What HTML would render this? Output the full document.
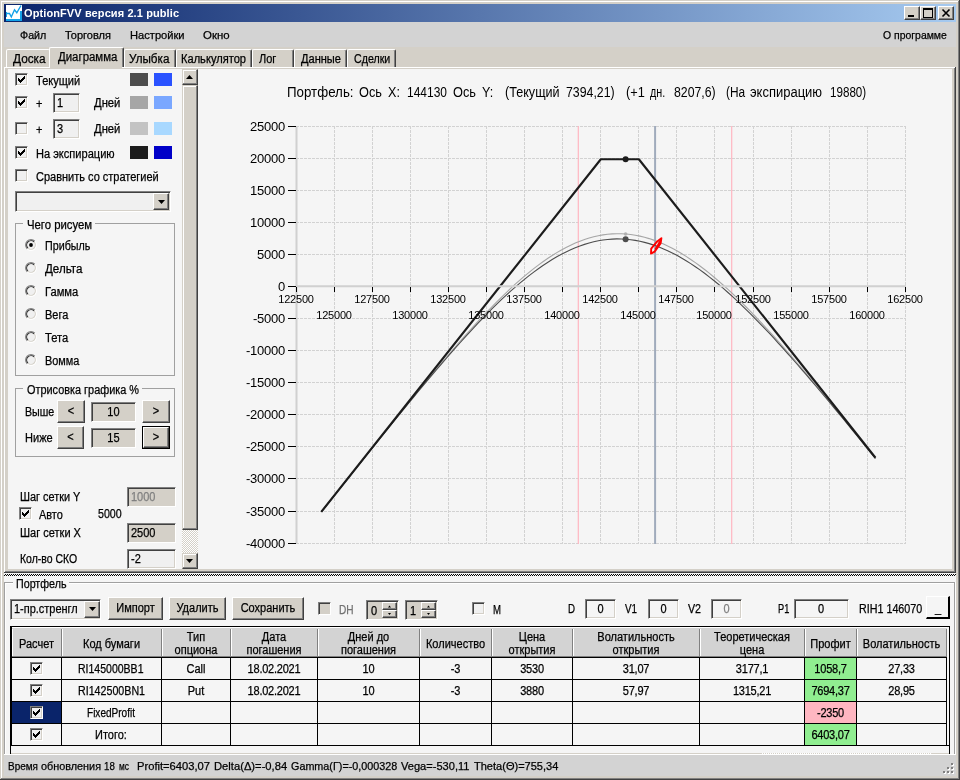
<!DOCTYPE html>
<html lang="ru"><head><meta charset="utf-8"><title>OptionFVV версия 2.1 public</title>
<style>
html,body{margin:0;padding:0;background:#d4d0c8;}
body{width:960px;height:780px;position:relative;overflow:hidden;font-family:"Liberation Sans",sans-serif;}
#w{position:absolute;left:0;top:0;width:960px;height:780px;overflow:hidden;}
#w div,#w span,#w svg{position:absolute;}
.t{font:12px/14px "Liberation Sans",sans-serif;color:#000;white-space:nowrap;transform:scaleX(.917);transform-origin:0 50%;}
.tm{font:11px/13px "Liberation Sans",sans-serif;color:#000;white-space:nowrap;}
.tt{font:bold 11px/13px "Liberation Sans",sans-serif;color:#fff;white-space:nowrap;letter-spacing:.1px;}
.ct{font:13px/15px "Liberation Sans",sans-serif;color:#000;white-space:nowrap;word-spacing:1.6px;letter-spacing:.1px;}
.cy{font:13px/15px "Liberation Sans",sans-serif;color:#000;white-space:nowrap;letter-spacing:-.25px;}
.cx{font:11px/13px "Liberation Sans",sans-serif;color:#000;white-space:nowrap;letter-spacing:-.2px;}
.hd{line-height:13px;}
.c{left:0;top:0;width:100%;height:100%;text-align:center;transform-origin:50% 50%;display:flex;align-items:center;justify-content:center;margin-top:-1px;}
.f,.t,.tm{-webkit-text-stroke:.25px;}
.f{white-space:nowrap;transform-origin:0 50%;font-family:"Liberation Sans",sans-serif;}
.g{left:0;top:0;width:960px;height:780px;will-change:transform;}
.gc{left:0;top:0;width:960px;height:780px;}
.sunk{box-sizing:border-box;border:1px solid;border-color:#808080 #fff #fff #808080;box-shadow:inset 1px 1px 0 #404040,inset -1px -1px 0 #d4d0c8;}
.btn{box-sizing:border-box;border:1px solid;border-color:#fff #404040 #404040 #fff;box-shadow:inset -1px -1px 0 #808080,inset 1px 1px 0 #d4d0c8;}
.sbtn{box-sizing:border-box;border:1px solid;border-color:#d4d0c8 #404040 #404040 #d4d0c8;box-shadow:inset -1px -1px 0 #808080,inset 1px 1px 0 #fff;}
.nr{border-right-color:transparent !important;box-shadow:none !important;}
.tab{box-sizing:border-box;border:1px solid;border-color:#fff #404040 transparent #fff;border-bottom:none;box-shadow:inset -1px 0 0 #808080;border-radius:2px 2px 0 0;}
</style></head>
<body><div id="w">
<div class="g">
<div style="left:0px;top:0px;width:960px;height:780px;background:#d4d0c8;"></div>
<div style="left:1px;top:1px;width:957px;height:1px;background:#ffffff;"></div>
<div style="left:1px;top:1px;width:1px;height:777px;background:#ffffff;"></div>
<div style="left:958px;top:1px;width:1px;height:778px;background:#808080;"></div>
<div style="left:1px;top:778px;width:958px;height:1px;background:#808080;"></div>
<div style="left:959px;top:0px;width:1px;height:780px;background:#404040;"></div>
<div style="left:0px;top:779px;width:960px;height:1px;background:#404040;"></div>
<div style="left:4px;top:4px;width:952px;height:18px;background:linear-gradient(90deg,#0a246a 0%,#a6caf0 100%);"></div>
<svg style="position:absolute;left:6px;top:5px" width="16" height="16" viewBox="0 0 16 16"><rect x="0" y="0" width="16" height="16" fill="#fff"/><rect x="0" y="14" width="16" height="2" fill="#12a1e8"/><rect x="14" y="6" width="2" height="10" fill="#12a1e8"/><rect x="0" y="7" width="1" height="5" fill="#12a1e8"/><path d="M0.5 8.5L3.5 8.5L5.3 12L8.5 4.8L10.8 7.8L15 0.5" fill="none" stroke="#12a1e8" stroke-width="1.4"/></svg>
<span class="tt" style="left:24px;top:7px;">OptionFVV версия 2.1 public</span>
<div class="btn" style="left:904px;top:6px;width:16px;height:14px;background:#d4d0c8;"></div>
<div class="btn" style="left:920px;top:6px;width:16px;height:14px;background:#d4d0c8;"></div>
<div class="btn" style="left:938px;top:6px;width:16px;height:14px;background:#d4d0c8;"></div>
<svg style="position:absolute;left:904px;top:6px" width="50" height="14" viewBox="0 0 50 14"><rect x="4" y="9" width="6" height="2" fill="#000"/><rect x="19" y="2" width="9" height="9" fill="none" stroke="#000" stroke-width="1" transform="translate(.5 .5)"/><rect x="19" y="2" width="10" height="2" fill="#000"/><path d="M38.5 3.5l7 7M45.5 3.5l-7 7" stroke="#000" stroke-width="1.6" fill="none"/></svg>
<div style="left:4px;top:22px;width:952px;height:25px;background:#d3d3d3;"></div>
<span class="f" style="left:19.50px;top:29px;font-size:11px;line-height:13px;color:#000;transform:scaleX(0.9722);">Файл</span>
<span class="f" style="left:65.00px;top:29px;font-size:11px;line-height:13px;color:#000;transform:scaleX(1.0000);">Торговля</span>
<span class="f" style="left:130.00px;top:29px;font-size:11px;line-height:13px;color:#000;transform:scaleX(1.0116);">Настройки</span>
<span class="f" style="left:203.00px;top:29px;font-size:11px;line-height:13px;color:#000;transform:scaleX(1.0392);">Окно</span>
<span class="f" style="left:882.70px;top:29px;font-size:11px;line-height:13px;color:#000;transform:scaleX(0.9487);">О программе</span>
<div class="tab nr" style="left:6px;top:49px;width:44px;height:18px;background:#d4d0c8;"></div>
<span class="f" style="left:13.00px;top:52px;font-size:12px;line-height:14px;color:#000;transform:scaleX(0.9850);">Доска</span>
<div class="tab" style="left:49px;top:47px;width:75px;height:22px;background:#d4d0c8;"></div>
<span class="f" style="left:58.00px;top:50px;font-size:12px;line-height:14px;color:#000;transform:scaleX(0.9520);">Диаграмма</span>
<div class="tab" style="left:124px;top:49px;width:52px;height:18px;background:#d4d0c8;"></div>
<span class="f" style="left:129.00px;top:52px;font-size:12px;line-height:14px;color:#000;transform:scaleX(0.9730);">Улыбка</span>
<div class="tab" style="left:176px;top:49px;width:76px;height:18px;background:#d4d0c8;"></div>
<span class="f" style="left:181.00px;top:52px;font-size:12px;line-height:14px;color:#000;transform:scaleX(0.9253);">Калькулятор</span>
<div class="tab" style="left:252px;top:49px;width:42px;height:18px;background:#d4d0c8;"></div>
<span class="f" style="left:258.75px;top:52px;font-size:12px;line-height:14px;color:#000;transform:scaleX(0.9139);">Лог</span>
<div class="tab" style="left:294px;top:49px;width:53px;height:18px;background:#d4d0c8;"></div>
<span class="f" style="left:301.00px;top:52px;font-size:12px;line-height:14px;color:#000;transform:scaleX(0.9222);">Данные</span>
<div class="tab" style="left:347px;top:49px;width:49px;height:18px;background:#d4d0c8;"></div>
<span class="f" style="left:353.75px;top:52px;font-size:12px;line-height:14px;color:#000;transform:scaleX(0.8869);">Сделки</span>
<div style="left:4px;top:67px;width:952px;height:506px;background:#d4d0c8;"></div>
<div style="left:4px;top:67px;width:951px;height:1px;background:#ffffff;"></div>
<div style="left:4px;top:67px;width:1px;height:505px;background:#ffffff;"></div>
<div style="left:50px;top:67px;width:72px;height:1px;background:#d4d0c8;"></div>
<div style="left:954px;top:68px;width:1px;height:504px;background:#808080;"></div>
<div style="left:955px;top:67px;width:1px;height:506px;background:#404040;"></div>
<div style="left:5px;top:571px;width:950px;height:1px;background:#808080;"></div>
<div style="left:4px;top:572px;width:952px;height:1px;background:#404040;"></div>
<div style="left:8px;top:69px;width:944px;height:500px;background:#f5f5f5;"></div>
<div class="sunk" style="left:15px;top:73px;width:13px;height:13px;background:#f0f0f0;"><svg width="7" height="7" viewBox="0 0 7 7" style="position:absolute;left:2px;top:2px"><path d="M0 2h1v1h1v1h1v-1h1v-1h1v-1h1v-1h1v3h-1v1h-1v1h-1v1h-1v1h-1v-1h-1v-1h-1z" fill="#000"/></svg></div>
<div style="left:130px;top:73px;width:18px;height:13px;background:#4d4d4d;"></div>
<div style="left:154px;top:73px;width:18px;height:13px;background:#2a52ff;"></div>
<span class="f" style="left:36.00px;top:74px;font-size:12px;line-height:14px;color:#000;transform:scaleX(0.9208);">Текущий</span>
<div class="sunk" style="left:15px;top:96px;width:13px;height:13px;background:#f0f0f0;"><svg width="7" height="7" viewBox="0 0 7 7" style="position:absolute;left:2px;top:2px"><path d="M0 2h1v1h1v1h1v-1h1v-1h1v-1h1v-1h1v3h-1v1h-1v1h-1v1h-1v1h-1v-1h-1v-1h-1z" fill="#000"/></svg></div>
<div style="left:130px;top:96px;width:18px;height:13px;background:#a6a6a6;"></div>
<div style="left:154px;top:96px;width:18px;height:13px;background:#7aa7ff;"></div>
<span class="t" style="left:36px;top:97px;">+</span>
<span class="f" style="left:94.00px;top:96px;font-size:12px;line-height:14px;color:#000;transform:scaleX(0.9387);">Дней</span>
<div class="sunk" style="left:15px;top:122px;width:13px;height:13px;background:#f0f0f0;"></div>
<div style="left:130px;top:122px;width:18px;height:13px;background:#c3c3c3;"></div>
<div style="left:154px;top:122px;width:18px;height:13px;background:#a8d8ff;"></div>
<span class="t" style="left:36px;top:123px;">+</span>
<span class="f" style="left:94.00px;top:122px;font-size:12px;line-height:14px;color:#000;transform:scaleX(0.9387);">Дней</span>
<div class="sunk" style="left:15px;top:146px;width:13px;height:13px;background:#f0f0f0;"><svg width="7" height="7" viewBox="0 0 7 7" style="position:absolute;left:2px;top:2px"><path d="M0 2h1v1h1v1h1v-1h1v-1h1v-1h1v-1h1v3h-1v1h-1v1h-1v1h-1v1h-1v-1h-1v-1h-1z" fill="#000"/></svg></div>
<div style="left:130px;top:146px;width:18px;height:13px;background:#1c1c1c;"></div>
<div style="left:154px;top:146px;width:18px;height:13px;background:#0000c8;"></div>
<span class="f" style="left:35.60px;top:147px;font-size:12px;line-height:14px;color:#000;transform:scaleX(0.9220);">На экспирацию</span>
<div class="sunk" style="left:53px;top:93px;width:27px;height:20px;background:#f0f0f0;"></div>
<span class="t" style="left:57px;top:96px;">1</span>
<div class="sunk" style="left:53px;top:119px;width:27px;height:20px;background:#f0f0f0;"></div>
<span class="t" style="left:57px;top:122px;">3</span>
<div class="sunk" style="left:15px;top:169px;width:13px;height:13px;background:#f0f0f0;"></div>
<span class="f" style="left:35.60px;top:170px;font-size:12px;line-height:14px;color:#000;transform:scaleX(0.9157);">Сравнить со стратегией</span>
<div class="sunk" style="left:15px;top:191px;width:156px;height:21px;background:#f0f0f0;"></div>
<div class="btn" style="left:153px;top:193px;width:16px;height:17px;background:#d4d0c8;"></div>
<svg style="position:absolute;left:158px;top:200px" width="7" height="4" viewBox="0 0 7 4"><path d="M0 0h7L3.5 4z" fill="#000"/></svg>
<div style="left:15px;top:223px;width:160px;height:153px;border:1px solid #a0a0a0;box-sizing:border-box;"></div>
<div style="left:23px;top:217px;width:72px;height:14px;background:#f5f5f5;"></div>
<span class="f" style="left:26.50px;top:218px;font-size:12px;line-height:14px;color:#000;transform:scaleX(0.9449);">Чего рисуем</span>
<svg style="position:absolute;left:25px;top:239px" width="12" height="12" viewBox="0 0 12 12"><circle cx="6" cy="6" r="4.5" fill="#f0f0f0"/><path d="M2.18 9.82A5.4 5.4 0 0 1 9.82 2.18" fill="none" stroke="#808080" stroke-width="1.1"/><path d="M9.82 2.18A5.4 5.4 0 0 1 2.18 9.82" fill="none" stroke="#ffffff" stroke-width="1.1"/><path d="M2.89 9.11A4.4 4.4 0 0 1 9.11 2.89" fill="none" stroke="#303030" stroke-width="1.1"/><path d="M9.11 2.89A4.4 4.4 0 0 1 2.89 9.11" fill="none" stroke="#d4d0c8" stroke-width="1.1"/><circle cx="6" cy="6" r="1.9" fill="#000"/></svg>
<span class="f" style="left:44.80px;top:239px;font-size:12px;line-height:14px;color:#000;transform:scaleX(0.8946);">Прибыль</span>
<svg style="position:absolute;left:25px;top:262px" width="12" height="12" viewBox="0 0 12 12"><circle cx="6" cy="6" r="4.5" fill="#f0f0f0"/><path d="M2.18 9.82A5.4 5.4 0 0 1 9.82 2.18" fill="none" stroke="#808080" stroke-width="1.1"/><path d="M9.82 2.18A5.4 5.4 0 0 1 2.18 9.82" fill="none" stroke="#ffffff" stroke-width="1.1"/><path d="M2.89 9.11A4.4 4.4 0 0 1 9.11 2.89" fill="none" stroke="#303030" stroke-width="1.1"/><path d="M9.11 2.89A4.4 4.4 0 0 1 2.89 9.11" fill="none" stroke="#d4d0c8" stroke-width="1.1"/></svg>
<span class="f" style="left:44.80px;top:262px;font-size:12px;line-height:14px;color:#000;transform:scaleX(0.9646);">Дельта</span>
<svg style="position:absolute;left:25px;top:285px" width="12" height="12" viewBox="0 0 12 12"><circle cx="6" cy="6" r="4.5" fill="#f0f0f0"/><path d="M2.18 9.82A5.4 5.4 0 0 1 9.82 2.18" fill="none" stroke="#808080" stroke-width="1.1"/><path d="M9.82 2.18A5.4 5.4 0 0 1 2.18 9.82" fill="none" stroke="#ffffff" stroke-width="1.1"/><path d="M2.89 9.11A4.4 4.4 0 0 1 9.11 2.89" fill="none" stroke="#303030" stroke-width="1.1"/><path d="M9.11 2.89A4.4 4.4 0 0 1 2.89 9.11" fill="none" stroke="#d4d0c8" stroke-width="1.1"/></svg>
<span class="f" style="left:44.80px;top:285px;font-size:12px;line-height:14px;color:#000;transform:scaleX(0.9315);">Гамма</span>
<svg style="position:absolute;left:25px;top:308px" width="12" height="12" viewBox="0 0 12 12"><circle cx="6" cy="6" r="4.5" fill="#f0f0f0"/><path d="M2.18 9.82A5.4 5.4 0 0 1 9.82 2.18" fill="none" stroke="#808080" stroke-width="1.1"/><path d="M9.82 2.18A5.4 5.4 0 0 1 2.18 9.82" fill="none" stroke="#ffffff" stroke-width="1.1"/><path d="M2.89 9.11A4.4 4.4 0 0 1 9.11 2.89" fill="none" stroke="#303030" stroke-width="1.1"/><path d="M9.11 2.89A4.4 4.4 0 0 1 2.89 9.11" fill="none" stroke="#d4d0c8" stroke-width="1.1"/></svg>
<span class="f" style="left:44.80px;top:308px;font-size:12px;line-height:14px;color:#000;transform:scaleX(0.9137);">Вега</span>
<svg style="position:absolute;left:25px;top:331px" width="12" height="12" viewBox="0 0 12 12"><circle cx="6" cy="6" r="4.5" fill="#f0f0f0"/><path d="M2.18 9.82A5.4 5.4 0 0 1 9.82 2.18" fill="none" stroke="#808080" stroke-width="1.1"/><path d="M9.82 2.18A5.4 5.4 0 0 1 2.18 9.82" fill="none" stroke="#ffffff" stroke-width="1.1"/><path d="M2.89 9.11A4.4 4.4 0 0 1 9.11 2.89" fill="none" stroke="#303030" stroke-width="1.1"/><path d="M9.11 2.89A4.4 4.4 0 0 1 2.89 9.11" fill="none" stroke="#d4d0c8" stroke-width="1.1"/></svg>
<span class="f" style="left:44.80px;top:331px;font-size:12px;line-height:14px;color:#000;transform:scaleX(0.9320);">Тета</span>
<svg style="position:absolute;left:25px;top:354px" width="12" height="12" viewBox="0 0 12 12"><circle cx="6" cy="6" r="4.5" fill="#f0f0f0"/><path d="M2.18 9.82A5.4 5.4 0 0 1 9.82 2.18" fill="none" stroke="#808080" stroke-width="1.1"/><path d="M9.82 2.18A5.4 5.4 0 0 1 2.18 9.82" fill="none" stroke="#ffffff" stroke-width="1.1"/><path d="M2.89 9.11A4.4 4.4 0 0 1 9.11 2.89" fill="none" stroke="#303030" stroke-width="1.1"/><path d="M9.11 2.89A4.4 4.4 0 0 1 2.89 9.11" fill="none" stroke="#d4d0c8" stroke-width="1.1"/></svg>
<span class="f" style="left:44.80px;top:354px;font-size:12px;line-height:14px;color:#000;transform:scaleX(0.9083);">Вомма</span>
<div style="left:15px;top:388px;width:160px;height:69px;border:1px solid #a0a0a0;box-sizing:border-box;"></div>
<div style="left:23px;top:382px;width:119px;height:14px;background:#f5f5f5;"></div>
<span class="f" style="left:26.50px;top:383px;font-size:12px;line-height:14px;color:#000;transform:scaleX(0.9078);">Отрисовка графика %</span>
<span class="f" style="left:25.40px;top:405px;font-size:12px;line-height:14px;color:#000;transform:scaleX(0.8882);">Выше</span>
<div class="btn" style="left:57px;top:400px;width:28px;height:23px;background:#d4d0c8;"><span class="t c">&lt;</span></div>
<div class="sunk" style="left:91px;top:402px;width:45px;height:20px;background:#d4d0c8;"></div>
<span class="t" style="left:91px;top:405px;width:45px;text-align:center;transform-origin:50% 50%;">10</span>
<div class="btn" style="left:142px;top:400px;width:28px;height:23px;background:#d4d0c8;"><span class="t c">&gt;</span></div>
<span class="f" style="left:25.40px;top:431px;font-size:12px;line-height:14px;color:#000;transform:scaleX(0.9195);">Ниже</span>
<div class="btn" style="left:57px;top:426px;width:27px;height:23px;background:#d4d0c8;"><span class="t c">&lt;</span></div>
<div class="sunk" style="left:91px;top:428px;width:45px;height:20px;background:#d4d0c8;"></div>
<span class="t" style="left:91px;top:431px;width:45px;text-align:center;transform-origin:50% 50%;">15</span>
<div style="left:142px;top:426px;width:28px;height:23px;background:#000;"></div>
<div class="btn" style="left:143px;top:427px;width:26px;height:21px;background:#d4d0c8;"><span class="t c">&gt;</span></div>
<span class="f" style="left:19.80px;top:490px;font-size:12px;line-height:14px;color:#000;transform:scaleX(0.9083);">Шаг сетки Y</span>
<div class="sunk" style="left:127px;top:487px;width:49px;height:20px;background:#d4d0c8;"></div>
<span class="t" style="left:131px;top:490px;color:#808080;">1000</span>
<div class="sunk" style="left:19px;top:507px;width:13px;height:13px;background:#f0f0f0;"><svg width="7" height="7" viewBox="0 0 7 7" style="position:absolute;left:2px;top:2px"><path d="M0 2h1v1h1v1h1v-1h1v-1h1v-1h1v-1h1v3h-1v1h-1v1h-1v1h-1v1h-1v-1h-1v-1h-1z" fill="#000"/></svg></div>
<span class="f" style="left:39.20px;top:508px;font-size:12px;line-height:14px;color:#000;transform:scaleX(0.9110);">Авто</span>
<span class="f" style="left:97.50px;top:507px;font-size:12px;line-height:14px;color:#000;transform:scaleX(0.8879);">5000</span>
<span class="f" style="left:19.80px;top:526px;font-size:12px;line-height:14px;color:#000;transform:scaleX(0.9173);">Шаг сетки X</span>
<div class="sunk" style="left:127px;top:523px;width:49px;height:20px;background:#d4d0c8;"></div>
<span class="t" style="left:131px;top:526px;">2500</span>
<span class="f" style="left:19.80px;top:552px;font-size:12px;line-height:14px;color:#000;transform:scaleX(0.8733);">Кол-во СКО</span>
<div class="sunk" style="left:127px;top:549px;width:49px;height:20px;background:#f0f0f0;"></div>
<span class="t" style="left:131px;top:552px;">-2</span>
<div style="left:182px;top:69px;width:16px;height:500px;background:repeating-conic-gradient(#fff 0 25%,#d4d0c8 0 50%) 0 0/2px 2px;"></div>
<div class="sbtn" style="left:182px;top:69px;width:16px;height:16px;background:#d4d0c8;"></div>
<svg style="position:absolute;left:186px;top:75px" width="7" height="4" viewBox="0 0 7 4"><path d="M0 4h7L3.5 0z" fill="#000"/></svg>
<div class="sbtn" style="left:182px;top:85px;width:16px;height:445px;background:#d4d0c8;"></div>
<div class="sbtn" style="left:182px;top:553px;width:16px;height:16px;background:#d4d0c8;"></div>
<svg style="position:absolute;left:186px;top:559px" width="7" height="4" viewBox="0 0 7 4"><path d="M0 0h7L3.5 4z" fill="#000"/></svg>
<svg style="position:absolute;left:198px;top:69px" width="754" height="500" viewBox="198 69 754 500"><path d="M296 126.5H906M296 158.5H906M296 190.5H906M296 222.5H906M296 254.5H906M296 318.5H906M296 350.5H906M296 382.5H906M296 414.5H906M296 446.5H906M296 478.5H906M296 511.5H906M296 543.5H906" fill="none" stroke="#d2d2d2" stroke-width="1" stroke-dasharray="3 1"/><path d="M334.5 126V544M372.5 126V544M410.5 126V544M448.5 126V544M486.5 126V544M524.5 126V544M562.5 126V544M600.5 126V544M638.5 126V544M676.5 126V544M714.5 126V544M753.5 126V544M791.5 126V544M829.5 126V544M867.5 126V544M905.5 126V544" fill="none" stroke="#d2d2d2" stroke-width="1" stroke-dasharray="3 1"/><path d="M578.3 126V544" stroke="#ffb6c1" stroke-width="1.2" fill="none"/><path d="M731.7 126V544" stroke="#ffb6c1" stroke-width="1.2" fill="none"/><path d="M655.1 126V544" stroke="#a0abbc" stroke-width="2" fill="none"/><path d="M321.27 511.92L325.89 506.10L330.51 500.28L335.12 494.47L339.74 488.66L344.36 482.85L348.98 477.05L353.60 471.25L358.22 465.45L362.83 459.66L367.45 453.87L372.07 448.09L376.69 442.32L381.31 436.56L385.92 430.80L390.54 425.06L395.16 419.33L399.78 413.62L404.40 407.92L409.02 402.24L413.63 396.58L418.25 390.94L422.87 385.32L427.49 379.74L432.11 374.18L436.73 368.66L441.34 363.18L445.96 357.74L450.58 352.34L455.20 346.99L459.82 341.70L464.43 336.46L469.05 331.29L473.67 326.18L478.29 321.15L482.91 316.19L487.53 311.32L492.14 306.54L496.76 301.86L501.38 297.28L506.00 292.81L510.62 288.45L515.24 284.21L519.85 280.11L524.47 276.13L529.09 272.30L533.71 268.62L538.33 265.09L542.95 261.72L547.56 258.51L552.18 255.48L556.80 252.63L561.42 249.96L566.04 247.47L570.65 245.18L575.27 243.09L579.89 241.20L584.51 239.52L589.13 238.05L593.75 236.78L598.36 235.74L602.98 234.91L607.60 234.29L612.22 233.90L616.84 233.72L621.46 233.77L626.07 234.03L630.69 234.52L635.31 235.22L639.93 236.13L644.55 237.26L649.16 238.60L653.78 240.14L658.40 241.89L663.02 243.83L667.64 245.97L672.26 248.31L676.87 250.82L681.49 253.52L686.11 256.39L690.73 259.44L695.35 262.64L699.97 266.01L704.58 269.52L709.20 273.19L713.82 276.99L718.44 280.92L723.06 284.99L727.68 289.17L732.29 293.47L736.91 297.88L741.53 302.39L746.15 307.01L750.77 311.71L755.38 316.50L760.00 321.38L764.62 326.33L769.24 331.35L773.86 336.44L778.48 341.59L783.09 346.80L787.71 352.06L792.33 357.38L796.95 362.74L801.57 368.14L806.19 373.58L810.80 379.06L815.42 384.58L820.04 390.12L824.66 395.69L829.28 401.29L833.89 406.91L838.51 412.55L843.13 418.21L847.75 423.88L852.37 429.58L856.99 435.29L861.60 441.01L866.22 446.74L870.84 452.48L875.46 458.24" fill="none" stroke="#a6a6a6" stroke-width="1.1"/><path d="M321.27 511.95L325.89 506.14L330.51 500.33L335.12 494.53L339.74 488.73L344.36 482.93L348.98 477.13L353.60 471.35L358.22 465.57L362.83 459.79L367.45 454.02L372.07 448.27L376.69 442.52L381.31 436.78L385.92 431.06L390.54 425.35L395.16 419.66L399.78 413.98L404.40 408.33L409.02 402.69L413.63 397.09L418.25 391.50L422.87 385.95L427.49 380.43L432.11 374.95L436.73 369.50L441.34 364.10L445.96 358.75L450.58 353.44L455.20 348.19L459.82 343.00L464.43 337.87L469.05 332.81L473.67 327.82L478.29 322.91L482.91 318.08L487.53 313.34L492.14 308.70L496.76 304.16L501.38 299.72L506.00 295.39L510.62 291.18L515.24 287.09L519.85 283.14L524.47 279.31L529.09 275.63L533.71 272.10L538.33 268.71L542.95 265.49L547.56 262.42L552.18 259.53L556.80 256.81L561.42 254.27L566.04 251.90L570.65 249.73L575.27 247.75L579.89 245.96L584.51 244.36L589.13 242.97L593.75 241.78L598.36 240.79L602.98 240.02L607.60 239.44L612.22 239.08L616.84 238.92L621.46 238.98L626.07 239.24L630.69 239.71L635.31 240.38L639.93 241.26L644.55 242.35L649.16 243.63L653.78 245.11L658.40 246.78L663.02 248.64L667.64 250.70L672.26 252.93L676.87 255.34L681.49 257.93L686.11 260.68L690.73 263.60L695.35 266.68L699.97 269.91L704.58 273.30L709.20 276.82L713.82 280.48L718.44 284.28L723.06 288.20L727.68 292.25L732.29 296.41L736.91 300.68L741.53 305.06L746.15 309.53L750.77 314.11L755.38 318.77L760.00 323.52L764.62 328.34L769.24 333.24L773.86 338.22L778.48 343.26L783.09 348.36L787.71 353.52L792.33 358.74L796.95 364.00L801.57 369.32L806.19 374.67L810.80 380.07L815.42 385.51L820.04 390.98L824.66 396.48L829.28 402.01L833.89 407.58L838.51 413.16L843.13 418.77L847.75 424.40L852.37 430.05L856.99 435.71L861.60 441.39L866.22 447.09L870.84 452.80L875.46 458.52" fill="none" stroke="#4d4d4d" stroke-width="1.1"/><path d="M321.27 511.88L600.80 159.28L638.86 159.28L875.46 457.72" fill="none" stroke="#1c1c1c" stroke-width="2.15" stroke-linejoin="round"/><path d="M296.5 126V544M296 286.3H906" fill="none" stroke="#d0d0d0" stroke-width="2"/><path d="M288 126.5H296M288 158.5H296M288 190.5H296M288 222.5H296M288 254.5H296M288 286.5H296M288 318.5H296M288 350.5H296M288 382.5H296M288 414.5H296M288 446.5H296M288 478.5H296M288 511.5H296M288 543.5H296M296.5 287V292M334.5 287V292M372.5 287V292M410.5 287V292M448.5 287V292M486.5 287V292M524.5 287V292M562.5 287V292M600.5 287V292M638.5 287V292M676.5 287V292M714.5 287V292M753.5 287V292M791.5 287V292M829.5 287V292M867.5 287V292M905.5 287V292" fill="none" stroke="#000" stroke-width="1"/><circle cx="625.62" cy="159.28" r="3" fill="#1c1c1c"/><circle cx="625.62" cy="234.00" r="1.8" fill="#b0b0b0"/><circle cx="625.62" cy="239.21" r="3" fill="#4d4d4d"/><path d="M651 253.6L651.2 248.6L657.2 241.4L661.4 238.2L660.6 243.4L654.6 251.6Z" fill="none" stroke="#ff0000" stroke-width="1.9" stroke-linejoin="round"/><path d="M655.5 249.5L660.5 241" fill="none" stroke="#ff0000" stroke-width="2.2"/></svg>
</div><div class="gc">
<span class="f" style="left:286.70px;top:84px;font-size:14px;line-height:16px;color:#000;transform:scaleX(0.9514);-webkit-text-stroke:0;">Портфель:</span>
<span class="f" style="left:359.20px;top:84px;font-size:14px;line-height:16px;color:#000;transform:scaleX(0.9114);-webkit-text-stroke:0;">Ось</span>
<span class="f" style="left:387.90px;top:84px;font-size:14px;line-height:16px;color:#000;transform:scaleX(0.8981);-webkit-text-stroke:0;">X:</span>
<span class="f" style="left:407.10px;top:84px;font-size:14px;line-height:16px;color:#000;transform:scaleX(0.8556);-webkit-text-stroke:0;">144130</span>
<span class="f" style="left:453.30px;top:84px;font-size:14px;line-height:16px;color:#000;transform:scaleX(0.9134);-webkit-text-stroke:0;">Ось</span>
<span class="f" style="left:481.70px;top:84px;font-size:14px;line-height:16px;color:#000;transform:scaleX(0.8960);-webkit-text-stroke:0;">Y:</span>
<span class="f" style="left:504.60px;top:84px;font-size:14px;line-height:16px;color:#000;transform:scaleX(0.9006);-webkit-text-stroke:0;">(Текущий</span>
<span class="f" style="left:565.80px;top:84px;font-size:14px;line-height:16px;color:#000;transform:scaleX(0.8796);-webkit-text-stroke:0;">7394,21)</span>
<span class="f" style="left:625.80px;top:84px;font-size:14px;line-height:16px;color:#000;transform:scaleX(0.9115);-webkit-text-stroke:0;">(+1</span>
<span class="f" style="left:649.80px;top:84px;font-size:14px;line-height:16px;color:#000;transform:scaleX(0.7696);-webkit-text-stroke:0;">дн.</span>
<span class="f" style="left:673.75px;top:84px;font-size:14px;line-height:16px;color:#000;transform:scaleX(0.8768);-webkit-text-stroke:0;">8207,6)</span>
<span class="f" style="left:725.80px;top:84px;font-size:14px;line-height:16px;color:#000;transform:scaleX(0.8486);-webkit-text-stroke:0;">(На</span>
<span class="f" style="left:750.20px;top:84px;font-size:14px;line-height:16px;color:#000;transform:scaleX(0.9273);-webkit-text-stroke:0;">экспирацию</span>
<span class="f" style="left:829.60px;top:84px;font-size:14px;line-height:16px;color:#000;transform:scaleX(0.8298);-webkit-text-stroke:0;">19880)</span>
<span class="cy" style="left:206px;top:119px;width:79px;text-align:right;transform-origin:100% 50%;">25000</span>
<span class="cy" style="left:206px;top:151px;width:79px;text-align:right;transform-origin:100% 50%;">20000</span>
<span class="cy" style="left:206px;top:183px;width:79px;text-align:right;transform-origin:100% 50%;">15000</span>
<span class="cy" style="left:206px;top:215px;width:79px;text-align:right;transform-origin:100% 50%;">10000</span>
<span class="cy" style="left:206px;top:247px;width:79px;text-align:right;transform-origin:100% 50%;">5000</span>
<span class="cy" style="left:206px;top:279px;width:79px;text-align:right;transform-origin:100% 50%;">0</span>
<span class="cy" style="left:206px;top:311px;width:79px;text-align:right;transform-origin:100% 50%;">-5000</span>
<span class="cy" style="left:206px;top:343px;width:79px;text-align:right;transform-origin:100% 50%;">-10000</span>
<span class="cy" style="left:206px;top:375px;width:79px;text-align:right;transform-origin:100% 50%;">-15000</span>
<span class="cy" style="left:206px;top:407px;width:79px;text-align:right;transform-origin:100% 50%;">-20000</span>
<span class="cy" style="left:206px;top:439px;width:79px;text-align:right;transform-origin:100% 50%;">-25000</span>
<span class="cy" style="left:206px;top:471px;width:79px;text-align:right;transform-origin:100% 50%;">-30000</span>
<span class="cy" style="left:206px;top:504px;width:79px;text-align:right;transform-origin:100% 50%;">-35000</span>
<span class="cy" style="left:206px;top:536px;width:79px;text-align:right;transform-origin:100% 50%;">-40000</span>
<span class="cx" style="left:265.5px;top:293px;width:61px;text-align:center;transform-origin:50% 50%;">122500</span>
<span class="cx" style="left:303.5px;top:309px;width:61px;text-align:center;transform-origin:50% 50%;">125000</span>
<span class="cx" style="left:341.5px;top:293px;width:61px;text-align:center;transform-origin:50% 50%;">127500</span>
<span class="cx" style="left:379.5px;top:309px;width:61px;text-align:center;transform-origin:50% 50%;">130000</span>
<span class="cx" style="left:417.5px;top:293px;width:61px;text-align:center;transform-origin:50% 50%;">132500</span>
<span class="cx" style="left:455.5px;top:309px;width:61px;text-align:center;transform-origin:50% 50%;">135000</span>
<span class="cx" style="left:493.5px;top:293px;width:61px;text-align:center;transform-origin:50% 50%;">137500</span>
<span class="cx" style="left:531.5px;top:309px;width:61px;text-align:center;transform-origin:50% 50%;">140000</span>
<span class="cx" style="left:569.5px;top:293px;width:61px;text-align:center;transform-origin:50% 50%;">142500</span>
<span class="cx" style="left:607.5px;top:309px;width:61px;text-align:center;transform-origin:50% 50%;">145000</span>
<span class="cx" style="left:645.5px;top:293px;width:61px;text-align:center;transform-origin:50% 50%;">147500</span>
<span class="cx" style="left:683.5px;top:309px;width:61px;text-align:center;transform-origin:50% 50%;">150000</span>
<span class="cx" style="left:722.5px;top:293px;width:61px;text-align:center;transform-origin:50% 50%;">152500</span>
<span class="cx" style="left:760.5px;top:309px;width:61px;text-align:center;transform-origin:50% 50%;">155000</span>
<span class="cx" style="left:798.5px;top:293px;width:61px;text-align:center;transform-origin:50% 50%;">157500</span>
<span class="cx" style="left:836.5px;top:309px;width:61px;text-align:center;transform-origin:50% 50%;">160000</span>
<span class="cx" style="left:874.5px;top:293px;width:61px;text-align:center;transform-origin:50% 50%;">162500</span>
</div><div class="g">
<div style="left:4px;top:573px;width:952px;height:181px;background:#f5f5f5;"></div>
<div style="left:4px;top:574px;width:952px;height:2px;background:repeating-conic-gradient(#000 0 25%,#f5f5f5 0 50%) 0 0/2px 2px;"></div>
<div style="left:4px;top:582px;width:951px;height:172px;border:1px solid #a0a0a0;border-bottom:none;box-sizing:border-box;box-shadow:inset 1px 1px 0 #fff,1px 0 0 #fff;"></div>
<div style="left:13px;top:577px;width:56px;height:12px;background:#f5f5f5;"></div>
<span class="f" style="left:15.50px;top:577px;font-size:12px;line-height:14px;color:#000;transform:scaleX(0.8918);">Портфель</span>
<div class="sunk" style="left:10px;top:599px;width:91px;height:21px;background:#f0f0f0;"></div>
<span class="f" style="left:13.75px;top:602px;font-size:12px;line-height:14px;color:#000;transform:scaleX(0.9140);">1-пр.стренгл</span>
<div class="btn" style="left:84px;top:601px;width:16px;height:17px;background:#d4d0c8;"></div>
<svg style="position:absolute;left:88.5px;top:607px" width="7" height="4" viewBox="0 0 7 4"><path d="M0 0h7L3.5 4z" fill="#000"/></svg>
<div class="btn" style="left:108px;top:597px;width:55px;height:23px;background:#d4d0c8;"><span class="t c">Импорт</span></div>
<div class="btn" style="left:169px;top:597px;width:57px;height:23px;background:#d4d0c8;"><span class="t c">Удалить</span></div>
<div class="btn" style="left:232px;top:597px;width:72px;height:23px;background:#d4d0c8;"><span class="t c">Сохранить</span></div>
<div class="sunk" style="left:318px;top:602px;width:13px;height:13px;background:#d4d0c8;"></div>
<span class="f" style="left:338.75px;top:603px;font-size:12px;line-height:14px;color:#727272;transform:scaleX(0.8432);">DH</span>
<div class="sunk" style="left:366px;top:600px;width:33px;height:20px;background:#d4d0c8;"></div>
<span class="t" style="left:371px;top:604px;">0</span>
<div class="btn" style="left:382px;top:602px;width:15px;height:8px;background:#d4d0c8;"></div>
<div class="btn" style="left:382px;top:610px;width:15px;height:8px;background:#d4d0c8;"></div>
<svg style="position:absolute;left:387px;top:604px" width="5" height="12" viewBox="0 0 5 12"><path d="M1 3.5h3L2.5 1.5zM1 9h3L2.5 11z" fill="#000"/></svg>
<div class="sunk" style="left:405px;top:600px;width:33px;height:20px;background:#d4d0c8;"></div>
<span class="t" style="left:410px;top:604px;">1</span>
<div class="btn" style="left:421px;top:602px;width:15px;height:8px;background:#d4d0c8;"></div>
<div class="btn" style="left:421px;top:610px;width:15px;height:8px;background:#d4d0c8;"></div>
<svg style="position:absolute;left:426px;top:604px" width="5" height="12" viewBox="0 0 5 12"><path d="M1 3.5h3L2.5 1.5zM1 9h3L2.5 11z" fill="#000"/></svg>
<div class="sunk" style="left:472px;top:602px;width:13px;height:13px;background:#f0f0f0;"></div>
<span class="f" style="left:492.50px;top:603px;font-size:12px;line-height:14px;color:#000;transform:scaleX(0.8000);">M</span>
<span class="f" style="left:567.50px;top:602px;font-size:12px;line-height:14px;color:#000;transform:scaleX(0.8116);">D</span>
<div class="sunk" style="left:585px;top:599px;width:31px;height:20px;background:#f5f5f5;"></div>
<span class="t" style="left:585px;top:602px;width:31px;text-align:center;transform-origin:50% 50%;">0</span>
<span class="f" style="left:625.00px;top:602px;font-size:12px;line-height:14px;color:#000;transform:scaleX(0.8205);">V1</span>
<div class="sunk" style="left:648px;top:599px;width:31px;height:20px;background:#f5f5f5;"></div>
<span class="t" style="left:648px;top:602px;width:31px;text-align:center;transform-origin:50% 50%;">0</span>
<span class="f" style="left:688.00px;top:602px;font-size:12px;line-height:14px;color:#000;transform:scaleX(0.8889);">V2</span>
<div class="sunk" style="left:711px;top:599px;width:31px;height:20px;background:#f5f5f5;"></div>
<span class="t" style="left:711px;top:602px;width:31px;text-align:center;transform-origin:50% 50%;color:#808080;">0</span>
<span class="f" style="left:777.50px;top:602px;font-size:12px;line-height:14px;color:#000;transform:scaleX(0.7692);">P1</span>
<div class="sunk" style="left:794px;top:599px;width:55px;height:20px;background:#f5f5f5;"></div>
<span class="t" style="left:794px;top:602px;width:54px;text-align:center;transform-origin:50% 50%;">0</span>
<span class="f" style="left:858.75px;top:602px;font-size:12px;line-height:14px;color:#000;transform:scaleX(0.8940);">RIH1 146070</span>
<div style="left:926px;top:596px;width:24px;height:23px;background:#f5f5f5;border-right:2px solid #000;border-bottom:2px solid #000;border-top:1px solid #fff;border-left:1px solid #fff;box-sizing:border-box;"></div>
<span class="t" style="left:926px;top:601px;width:24px;text-align:center;transform-origin:50% 50%;">_</span>
<div style="left:10px;top:626px;width:940px;height:128px;background:#000;"></div>
<div style="left:11px;top:627px;width:938px;height:127px;background:#f5f5f5;"></div>
<div style="left:11px;top:627px;width:936px;height:119px;background:#000;"></div>
<div style="left:12px;top:627px;width:935px;height:30px;background:#d3d3d3;"></div>
<div style="left:12px;top:627px;width:50px;height:30px;background:#d3d3d3;border-top:1px solid #fff;border-bottom:1px solid #808080;box-sizing:border-box;"></div>
<div style="left:12px;top:629px;width:1px;height:27px;background:#fff;"></div>
<div style="left:61px;top:629px;width:1px;height:27px;background:#808080;"></div>
<span class="t hd" style="left:12px;top:638px;width:49px;text-align:center;transform-origin:50% 50%;">Расчет</span>
<div style="left:62px;top:627px;width:100px;height:30px;background:#d3d3d3;border-top:1px solid #fff;border-bottom:1px solid #808080;box-sizing:border-box;"></div>
<div style="left:62px;top:629px;width:1px;height:27px;background:#fff;"></div>
<div style="left:161px;top:629px;width:1px;height:27px;background:#808080;"></div>
<span class="t hd" style="left:62px;top:638px;width:99px;text-align:center;transform-origin:50% 50%;">Код бумаги</span>
<div style="left:162px;top:627px;width:69px;height:30px;background:#d3d3d3;border-top:1px solid #fff;border-bottom:1px solid #808080;box-sizing:border-box;"></div>
<div style="left:162px;top:629px;width:1px;height:27px;background:#fff;"></div>
<div style="left:230px;top:629px;width:1px;height:27px;background:#808080;"></div>
<span class="t hd" style="left:162px;top:631px;width:68px;text-align:center;transform-origin:50% 50%;">Тип<br>опциона</span>
<div style="left:231px;top:627px;width:87px;height:30px;background:#d3d3d3;border-top:1px solid #fff;border-bottom:1px solid #808080;box-sizing:border-box;"></div>
<div style="left:231px;top:629px;width:1px;height:27px;background:#fff;"></div>
<div style="left:317px;top:629px;width:1px;height:27px;background:#808080;"></div>
<span class="t hd" style="left:231px;top:631px;width:86px;text-align:center;transform-origin:50% 50%;">Дата<br>погашения</span>
<div style="left:318px;top:627px;width:102px;height:30px;background:#d3d3d3;border-top:1px solid #fff;border-bottom:1px solid #808080;box-sizing:border-box;"></div>
<div style="left:318px;top:629px;width:1px;height:27px;background:#fff;"></div>
<div style="left:419px;top:629px;width:1px;height:27px;background:#808080;"></div>
<span class="t hd" style="left:318px;top:631px;width:101px;text-align:center;transform-origin:50% 50%;">Дней до<br>погашения</span>
<div style="left:420px;top:627px;width:72px;height:30px;background:#d3d3d3;border-top:1px solid #fff;border-bottom:1px solid #808080;box-sizing:border-box;"></div>
<div style="left:420px;top:629px;width:1px;height:27px;background:#fff;"></div>
<div style="left:491px;top:629px;width:1px;height:27px;background:#808080;"></div>
<span class="t hd" style="left:420px;top:638px;width:71px;text-align:center;transform-origin:50% 50%;">Количество</span>
<div style="left:492px;top:627px;width:81px;height:30px;background:#d3d3d3;border-top:1px solid #fff;border-bottom:1px solid #808080;box-sizing:border-box;"></div>
<div style="left:492px;top:629px;width:1px;height:27px;background:#fff;"></div>
<div style="left:572px;top:629px;width:1px;height:27px;background:#808080;"></div>
<span class="t hd" style="left:492px;top:631px;width:80px;text-align:center;transform-origin:50% 50%;">Цена<br>открытия</span>
<div style="left:573px;top:627px;width:127px;height:30px;background:#d3d3d3;border-top:1px solid #fff;border-bottom:1px solid #808080;box-sizing:border-box;"></div>
<div style="left:573px;top:629px;width:1px;height:27px;background:#fff;"></div>
<div style="left:699px;top:629px;width:1px;height:27px;background:#808080;"></div>
<span class="t hd" style="left:573px;top:631px;width:126px;text-align:center;transform-origin:50% 50%;">Волатильность<br>открытия</span>
<div style="left:700px;top:627px;width:105px;height:30px;background:#d3d3d3;border-top:1px solid #fff;border-bottom:1px solid #808080;box-sizing:border-box;"></div>
<div style="left:700px;top:629px;width:1px;height:27px;background:#fff;"></div>
<div style="left:804px;top:629px;width:1px;height:27px;background:#808080;"></div>
<span class="t hd" style="left:700px;top:631px;width:104px;text-align:center;transform-origin:50% 50%;">Теоретическая<br>цена</span>
<div style="left:805px;top:627px;width:52px;height:30px;background:#d3d3d3;border-top:1px solid #fff;border-bottom:1px solid #808080;box-sizing:border-box;"></div>
<div style="left:805px;top:629px;width:1px;height:27px;background:#fff;"></div>
<div style="left:856px;top:629px;width:1px;height:27px;background:#808080;"></div>
<span class="t hd" style="left:805px;top:638px;width:51px;text-align:center;transform-origin:50% 50%;">Профит</span>
<div style="left:857px;top:627px;width:90px;height:30px;background:#d3d3d3;border-top:1px solid #fff;border-bottom:1px solid #808080;box-sizing:border-box;"></div>
<div style="left:857px;top:629px;width:1px;height:27px;background:#fff;"></div>
<div style="left:946px;top:629px;width:1px;height:27px;background:#808080;"></div>
<span class="t hd" style="left:857px;top:638px;width:89px;text-align:center;transform-origin:50% 50%;">Волатильность</span>
<div style="left:12px;top:658px;width:49px;height:21px;background:#f5f5f5;"></div>
<div class="sunk" style="left:30px;top:662px;width:13px;height:13px;background:#f0f0f0;"><svg width="7" height="7" viewBox="0 0 7 7" style="position:absolute;left:2px;top:2px"><path d="M0 2h1v1h1v1h1v-1h1v-1h1v-1h1v-1h1v3h-1v1h-1v1h-1v1h-1v1h-1v-1h-1v-1h-1z" fill="#000"/></svg></div>
<div style="left:62px;top:658px;width:99px;height:21px;background:#f5f5f5;"></div>
<span class="f" style="left:77.50px;top:662px;font-size:12px;line-height:14px;color:#000;transform:scaleX(0.8763);">RI145000BB1</span>
<div style="left:162px;top:658px;width:68px;height:21px;background:#f5f5f5;"></div>
<span class="t" style="left:162px;top:662px;width:68px;text-align:center;transform-origin:50% 50%;">Call</span>
<div style="left:231px;top:658px;width:86px;height:21px;background:#f5f5f5;"></div>
<span class="t" style="left:231px;top:662px;width:86px;text-align:center;transform-origin:50% 50%;letter-spacing:-.25px;">18.02.2021</span>
<div style="left:318px;top:658px;width:101px;height:21px;background:#f5f5f5;"></div>
<span class="t" style="left:318px;top:662px;width:101px;text-align:center;transform-origin:50% 50%;letter-spacing:-.25px;">10</span>
<div style="left:420px;top:658px;width:71px;height:21px;background:#f5f5f5;"></div>
<span class="t" style="left:420px;top:662px;width:71px;text-align:center;transform-origin:50% 50%;letter-spacing:-.25px;">-3</span>
<div style="left:492px;top:658px;width:80px;height:21px;background:#f5f5f5;"></div>
<span class="t" style="left:492px;top:662px;width:80px;text-align:center;transform-origin:50% 50%;letter-spacing:-.25px;">3530</span>
<div style="left:573px;top:658px;width:126px;height:21px;background:#f5f5f5;"></div>
<span class="t" style="left:573px;top:662px;width:126px;text-align:center;transform-origin:50% 50%;letter-spacing:-.25px;">31,07</span>
<div style="left:700px;top:658px;width:104px;height:21px;background:#f5f5f5;"></div>
<span class="t" style="left:700px;top:662px;width:104px;text-align:center;transform-origin:50% 50%;letter-spacing:-.25px;">3177,1</span>
<div style="left:805px;top:658px;width:51px;height:21px;background:#90ee90;"></div>
<span class="t" style="left:805px;top:662px;width:51px;text-align:center;transform-origin:50% 50%;letter-spacing:-.25px;">1058,7</span>
<div style="left:857px;top:658px;width:89px;height:21px;background:#f5f5f5;"></div>
<span class="t" style="left:857px;top:662px;width:89px;text-align:center;transform-origin:50% 50%;letter-spacing:-.25px;">27,33</span>
<div style="left:12px;top:680px;width:49px;height:21px;background:#f5f5f5;"></div>
<div class="sunk" style="left:30px;top:684px;width:13px;height:13px;background:#f0f0f0;"><svg width="7" height="7" viewBox="0 0 7 7" style="position:absolute;left:2px;top:2px"><path d="M0 2h1v1h1v1h1v-1h1v-1h1v-1h1v-1h1v3h-1v1h-1v1h-1v1h-1v1h-1v-1h-1v-1h-1z" fill="#000"/></svg></div>
<div style="left:62px;top:680px;width:99px;height:21px;background:#f5f5f5;"></div>
<span class="f" style="left:77.50px;top:684px;font-size:12px;line-height:14px;color:#000;transform:scaleX(0.8889);">RI142500BN1</span>
<div style="left:162px;top:680px;width:68px;height:21px;background:#f5f5f5;"></div>
<span class="t" style="left:162px;top:684px;width:68px;text-align:center;transform-origin:50% 50%;">Put</span>
<div style="left:231px;top:680px;width:86px;height:21px;background:#f5f5f5;"></div>
<span class="t" style="left:231px;top:684px;width:86px;text-align:center;transform-origin:50% 50%;letter-spacing:-.25px;">18.02.2021</span>
<div style="left:318px;top:680px;width:101px;height:21px;background:#f5f5f5;"></div>
<span class="t" style="left:318px;top:684px;width:101px;text-align:center;transform-origin:50% 50%;letter-spacing:-.25px;">10</span>
<div style="left:420px;top:680px;width:71px;height:21px;background:#f5f5f5;"></div>
<span class="t" style="left:420px;top:684px;width:71px;text-align:center;transform-origin:50% 50%;letter-spacing:-.25px;">-3</span>
<div style="left:492px;top:680px;width:80px;height:21px;background:#f5f5f5;"></div>
<span class="t" style="left:492px;top:684px;width:80px;text-align:center;transform-origin:50% 50%;letter-spacing:-.25px;">3880</span>
<div style="left:573px;top:680px;width:126px;height:21px;background:#f5f5f5;"></div>
<span class="t" style="left:573px;top:684px;width:126px;text-align:center;transform-origin:50% 50%;letter-spacing:-.25px;">57,97</span>
<div style="left:700px;top:680px;width:104px;height:21px;background:#f5f5f5;"></div>
<span class="t" style="left:700px;top:684px;width:104px;text-align:center;transform-origin:50% 50%;letter-spacing:-.25px;">1315,21</span>
<div style="left:805px;top:680px;width:51px;height:21px;background:#90ee90;"></div>
<span class="t" style="left:805px;top:684px;width:51px;text-align:center;transform-origin:50% 50%;letter-spacing:-.25px;">7694,37</span>
<div style="left:857px;top:680px;width:89px;height:21px;background:#f5f5f5;"></div>
<span class="t" style="left:857px;top:684px;width:89px;text-align:center;transform-origin:50% 50%;letter-spacing:-.25px;">28,95</span>
<div style="left:12px;top:702px;width:49px;height:21px;background:#0a246a;"></div>
<div class="sunk" style="left:30px;top:706px;width:13px;height:13px;background:#f0f0f0;"><svg width="7" height="7" viewBox="0 0 7 7" style="position:absolute;left:2px;top:2px"><path d="M0 2h1v1h1v1h1v-1h1v-1h1v-1h1v-1h1v3h-1v1h-1v1h-1v1h-1v1h-1v-1h-1v-1h-1z" fill="#000"/></svg></div>
<div style="left:62px;top:702px;width:99px;height:21px;background:#f5f5f5;"></div>
<span class="f" style="left:87.00px;top:706px;font-size:12px;line-height:14px;color:#000;transform:scaleX(0.8366);">FixedProfit</span>
<div style="left:162px;top:702px;width:68px;height:21px;background:#f5f5f5;"></div>
<div style="left:231px;top:702px;width:86px;height:21px;background:#f5f5f5;"></div>
<div style="left:318px;top:702px;width:101px;height:21px;background:#f5f5f5;"></div>
<div style="left:420px;top:702px;width:71px;height:21px;background:#f5f5f5;"></div>
<div style="left:492px;top:702px;width:80px;height:21px;background:#f5f5f5;"></div>
<div style="left:573px;top:702px;width:126px;height:21px;background:#f5f5f5;"></div>
<div style="left:700px;top:702px;width:104px;height:21px;background:#f5f5f5;"></div>
<div style="left:805px;top:702px;width:51px;height:21px;background:#ffb6c1;"></div>
<span class="t" style="left:805px;top:706px;width:51px;text-align:center;transform-origin:50% 50%;letter-spacing:-.25px;">-2350</span>
<div style="left:857px;top:702px;width:89px;height:21px;background:#f5f5f5;"></div>
<div style="left:12px;top:724px;width:49px;height:21px;background:#f5f5f5;"></div>
<div class="sunk" style="left:30px;top:728px;width:13px;height:13px;background:#f0f0f0;"><svg width="7" height="7" viewBox="0 0 7 7" style="position:absolute;left:2px;top:2px"><path d="M0 2h1v1h1v1h1v-1h1v-1h1v-1h1v-1h1v3h-1v1h-1v1h-1v1h-1v1h-1v-1h-1v-1h-1z" fill="#000"/></svg></div>
<div style="left:62px;top:724px;width:99px;height:21px;background:#f5f5f5;"></div>
<span class="f" style="left:94.50px;top:728px;font-size:12px;line-height:14px;color:#000;transform:scaleX(0.9137);">Итого:</span>
<div style="left:162px;top:724px;width:68px;height:21px;background:#f5f5f5;"></div>
<div style="left:231px;top:724px;width:86px;height:21px;background:#f5f5f5;"></div>
<div style="left:318px;top:724px;width:101px;height:21px;background:#f5f5f5;"></div>
<div style="left:420px;top:724px;width:71px;height:21px;background:#f5f5f5;"></div>
<div style="left:492px;top:724px;width:80px;height:21px;background:#f5f5f5;"></div>
<div style="left:573px;top:724px;width:126px;height:21px;background:#f5f5f5;"></div>
<div style="left:700px;top:724px;width:104px;height:21px;background:#f5f5f5;"></div>
<div style="left:805px;top:724px;width:51px;height:21px;background:#90ee90;"></div>
<span class="t" style="left:805px;top:728px;width:51px;text-align:center;transform-origin:50% 50%;letter-spacing:-.25px;">6403,07</span>
<div style="left:857px;top:724px;width:89px;height:21px;background:#f5f5f5;"></div>
<div style="left:11px;top:753px;width:938px;height:1px;background:#d4d0c8;"></div>
<div style="left:762px;top:753px;width:170px;height:1px;background:repeating-linear-gradient(90deg,#fff 0 1px,#d4d0c8 1px 2px);"></div>
<div style="left:11px;top:745px;width:938px;height:1px;background:#000;"></div>
<div style="left:4px;top:754px;width:952px;height:1px;background:#fff;"></div>
<div style="left:4px;top:755px;width:952px;height:21px;background:#d3d3d3;"></div>
<span class="f" style="left:7.50px;top:760px;font-size:11px;line-height:13px;color:#000;transform:scaleX(0.9057);">Время</span>
<span class="f" style="left:40.80px;top:760px;font-size:11px;line-height:13px;color:#000;transform:scaleX(0.9856);">обновления</span>
<span class="f" style="left:104.20px;top:760px;font-size:11px;line-height:13px;color:#000;transform:scaleX(0.8816);">18</span>
<span class="f" style="left:119.20px;top:760px;font-size:11px;line-height:13px;color:#000;transform:scaleX(0.7619);">мс</span>
<span class="f" style="left:136.70px;top:760px;font-size:11px;line-height:13px;color:#000;transform:scaleX(1.0157);">Profit=6403,07</span>
<span class="f" style="left:213.80px;top:760px;font-size:11px;line-height:13px;color:#000;transform:scaleX(1.0184);">Delta(Δ)=-0,84</span>
<span class="f" style="left:290.90px;top:760px;font-size:11px;line-height:13px;color:#000;transform:scaleX(0.9797);">Gamma(Γ)=-0,000328</span>
<span class="f" style="left:401.25px;top:760px;font-size:11px;line-height:13px;color:#000;transform:scaleX(1.0066);">Vega=-530,11</span>
<span class="f" style="left:474.40px;top:760px;font-size:11px;line-height:13px;color:#000;transform:scaleX(1.0027);">Theta(Θ)=755,34</span>
<svg style="position:absolute;left:942px;top:762px" width="13" height="13" viewBox="0 0 13 13"><g fill="#fff"><rect x="10" y="10" width="2" height="2"/><rect x="6" y="10" width="2" height="2"/><rect x="2" y="10" width="2" height="2"/><rect x="10" y="6" width="2" height="2"/><rect x="6" y="6" width="2" height="2"/><rect x="10" y="2" width="2" height="2"/></g><g fill="#808080"><rect x="9" y="9" width="2" height="2"/><rect x="5" y="9" width="2" height="2"/><rect x="1" y="9" width="2" height="2"/><rect x="9" y="5" width="2" height="2"/><rect x="5" y="5" width="2" height="2"/><rect x="9" y="1" width="2" height="2"/></g></svg>
</div>
</div></body></html>
